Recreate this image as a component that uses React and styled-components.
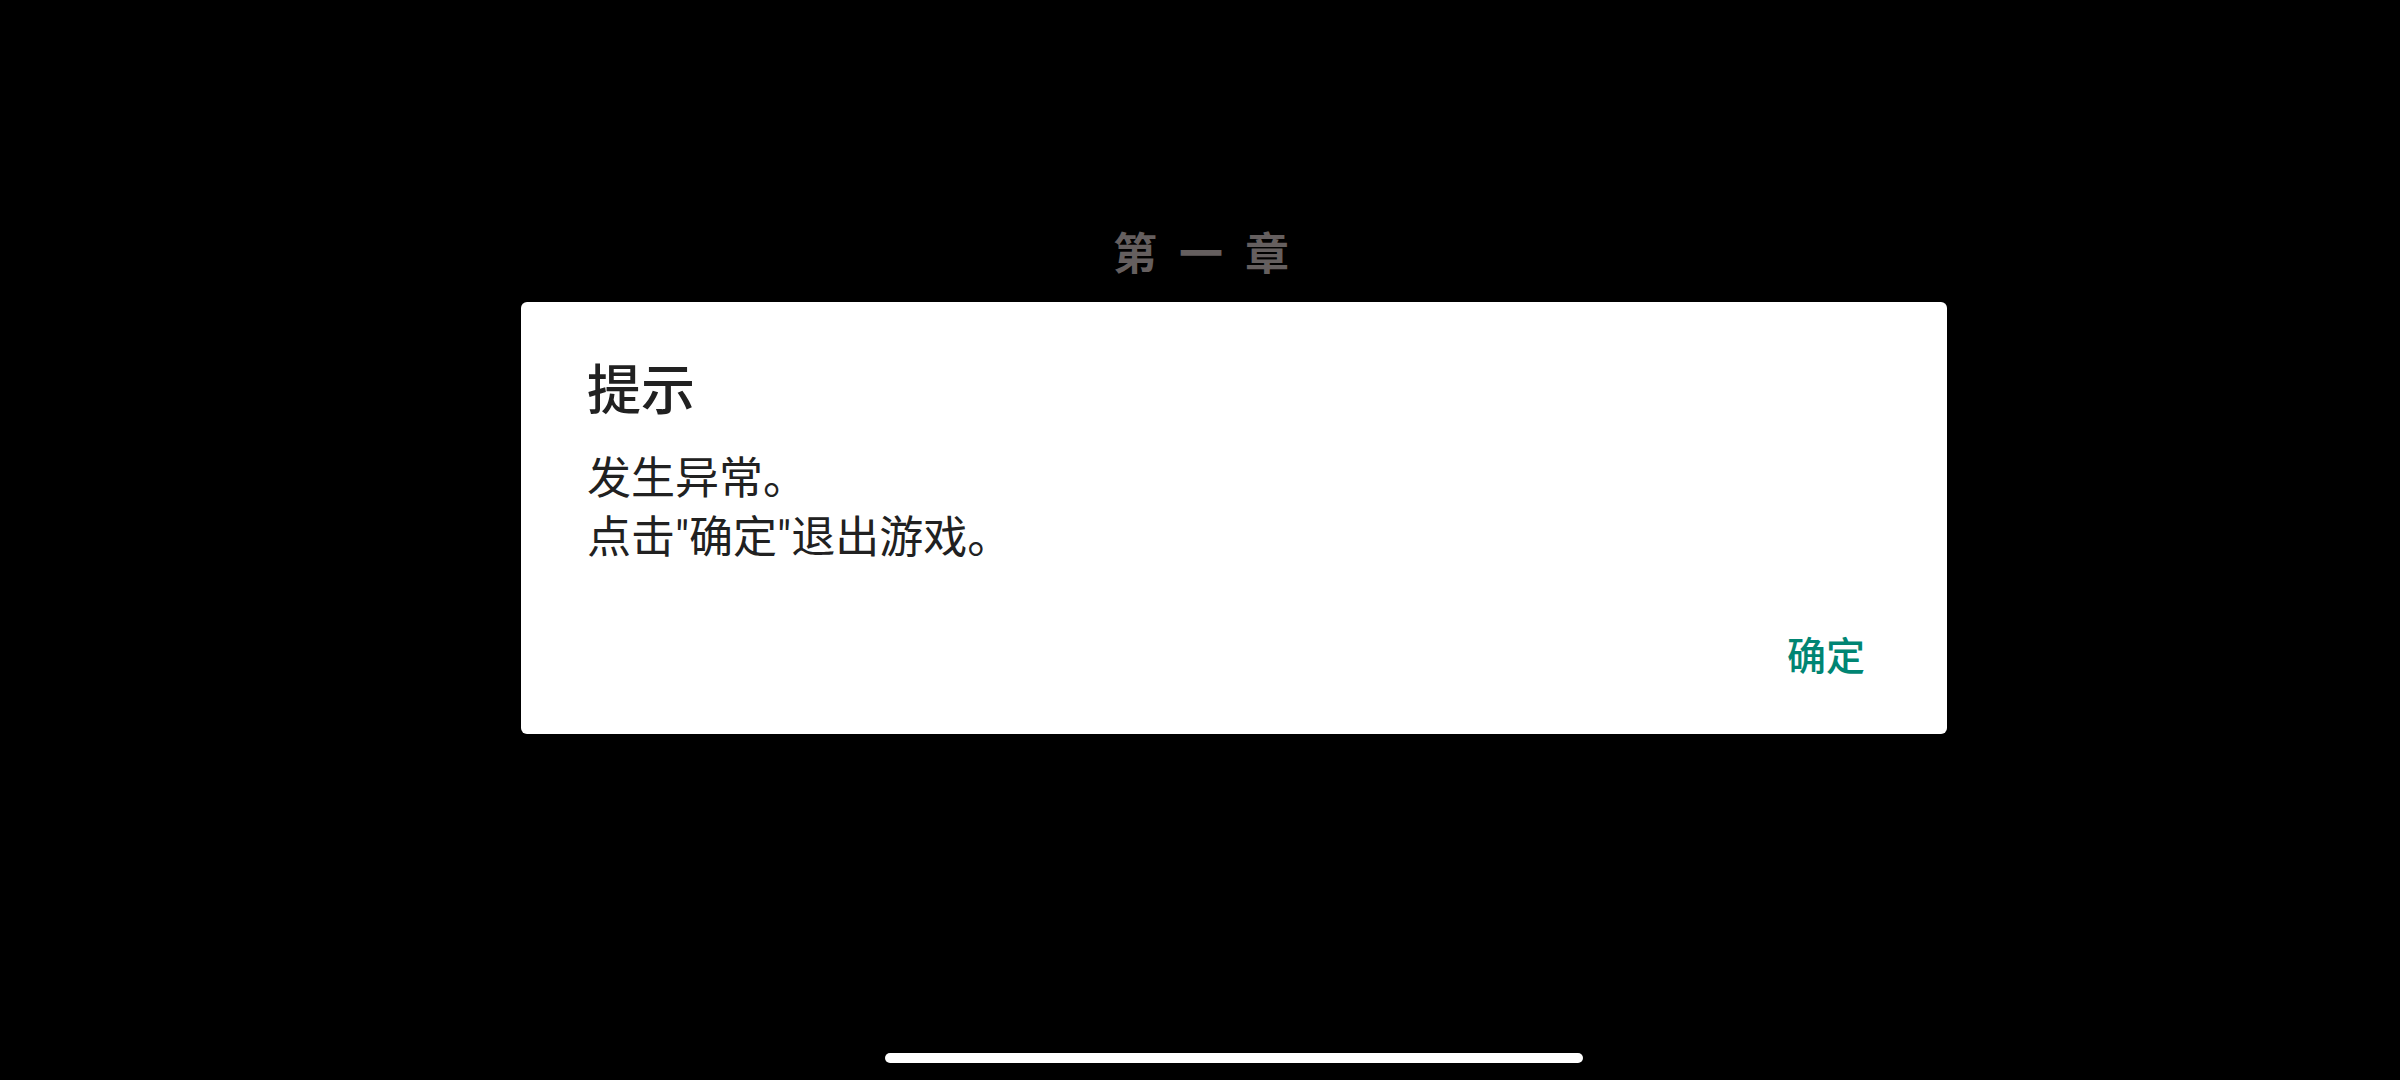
import React from 'react';
import styled, { createGlobalStyle } from 'styled-components';

const GlobalStyle = createGlobalStyle`
  * {
    box-sizing: border-box;
  }

  body {
    margin: 0;
    background: #000;
    font-family: Roboto, "Noto Sans CJK SC", sans-serif;
  }
`;

const Screen = styled.div`
  display: grid;
  min-height: 100vh;
  background: #000;

  > * {
    grid-area: 1 / 1;
  }
`;

const Scene = styled.div`
  display: flex;
  justify-content: center;
  align-items: flex-start;
  padding-top: 225px;
  padding-left: 2px;
`;

const Chapter = styled.h1`
  display: flex;
  gap: 22px;
  margin: 0;
  color: #655f5f;
  font-size: 44px;
  font-weight: 700;
  line-height: 60px;
`;

const Overlay = styled.div`
  z-index: 1;
  display: flex;
  flex-direction: column;
  padding-left: 68px;
`;

const Center = styled.div`
  flex: 1;
  display: flex;
  justify-content: center;
  align-items: center;
`;

const Dialog = styled.div`
  width: 100%;
  max-width: 1426px;
  padding: 54px 68px 26px 66px;
  border-radius: 6px;
  background: #fff;
  color: #212121;
`;

const Title = styled.h2`
  margin: 0;
  font-size: 54px;
  font-weight: 500;
  line-height: 72px;
`;

const Message = styled.p`
  margin: 22px 0 0;
  font-size: 44px;
  line-height: 59px;
`;

const Actions = styled.div`
  display: flex;
  justify-content: flex-end;
  margin-top: 38px;
`;

const Button = styled.button`
  padding: 24px 14px;
  border: 0;
  background: none;
  color: #008573;
  font-family: inherit;
  font-size: 39px;
  font-weight: 500;
  line-height: 54px;
  cursor: pointer;
`;

const NavBar = styled.div`
  display: flex;
  justify-content: center;
  align-items: center;
  height: 44px;
`;

const NavHandle = styled.div`
  width: 100%;
  max-width: 698px;
  height: 10px;
  border-radius: 5px;
  background: #fff;
`;

const App = () => {
  return (
    <Screen>
      <GlobalStyle />
      <Scene>
        <Chapter>
          <span>第</span>
          <span>一</span>
          <span>章</span>
        </Chapter>
      </Scene>
      <Overlay>
        <Center>
          <Dialog role="alertdialog" aria-labelledby="title" aria-describedby="message">
            <Title id="title">提示</Title>
            <Message id="message">
              发生异常。
              <br />
              点击"确定"退出游戏。
            </Message>
            <Actions>
              <Button type="button">确定</Button>
            </Actions>
          </Dialog>
        </Center>
        <NavBar>
          <NavHandle />
        </NavBar>
      </Overlay>
    </Screen>
  )
};

export default App;
